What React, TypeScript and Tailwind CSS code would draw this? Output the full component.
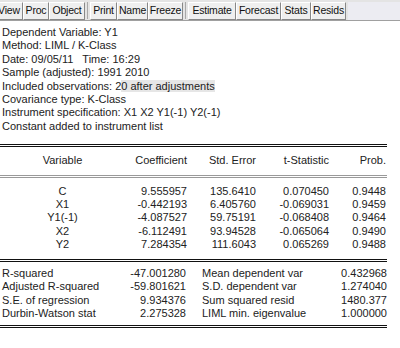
const font = { fontFamily: '"Liberation Sans", Arial, sans-serif' };

const buttons = [
  { label: "View", w: "w-[28px]", first: true },
  { label: "Proc", w: "w-[26px]" },
  { label: "Object", w: "w-[36px]" },
  { sep: true },
  { label: "Print", w: "w-[27px]" },
  { label: "Name", w: "w-[31px]" },
  { label: "Freeze", w: "w-[35px]" },
  { sep: true },
  { label: "Estimate", w: "w-[48px]" },
  { label: "Forecast", w: "w-[45px]" },
  { label: "Stats", w: "w-[30px]" },
  { label: "Resids", w: "w-[35px]" },
];

const header = [
  "Dependent Variable: Y1",
  "Method: LIML / K-Class",
  "Date: 09/05/11   Time: 16:29",
  "Sample (adjusted): 1991 2010",
  null,
  "Covariance type: K-Class",
  "Instrument specification: X1 X2 Y1(-1) Y2(-1)",
  "Constant added to instrument list",
];

const rows = [
  ["C", "9.555957", "135.6410", "0.070450", "0.9448"],
  ["X1", "-0.442193", "6.405760", "-0.069031", "0.9459"],
  ["Y1(-1)", "-4.087527", "59.75191", "-0.068408", "0.9464"],
  ["X2", "-6.112491", "93.94528", "-0.065064", "0.9490"],
  ["Y2", "7.284354", "111.6043", "0.065269", "0.9488"],
];

const stats = [
  ["R-squared", "-47.001280", "Mean dependent var", "0.432968"],
  ["Adjusted R-squared", "-59.801621", "S.D. dependent var", "1.274040"],
  ["S.E. of regression", "9.934376", "Sum squared resid", "1480.377"],
  ["Durbin-Watson stat", "2.275328", "LIML min. eigenvalue", "1.000000"],
];

const cols = "grid grid-cols-[125px_62px_69px_73px_57px]";

function Toolbar() {
  return (
    <div className="flex h-[21px] items-center overflow-hidden border-b border-[#a0a0a0] bg-[#e4e4e4] pt-[1px]">
      {buttons.map((b, i) =>
        b.sep ? (
          <div key={i} className="mx-[2px] h-[17px] w-[1px] border-l border-[#a8a8a8] bg-white" />
        ) : (
          <div
            key={i}
            className={`${b.w} ${b.first ? "-ml-[5px]" : ""} flex h-[18px] shrink-0 items-center justify-center border border-t-white border-l-white border-r-[#888] border-b-[#888] bg-[#efefef] text-[10.5px] tracking-[-0.2px] text-[#111]`}
          >
            {b.label}
          </div>
        )
      )}
      <div className="ml-[2px] h-[18px] flex-1 bg-[#ececf2]" />
    </div>
  );
}

export default function App() {
  return (
    <div className="h-[348px] w-[400px] overflow-hidden bg-white text-[11px] leading-[13.4px] text-[#222]" style={font}>
      <Toolbar />
      <div className="px-[2px] pt-[5px]">
        {header.map((h, i) =>
          h ? (
            <div key={i} className="whitespace-pre">{h}</div>
          ) : (
            <div key={i} className="whitespace-pre">
              Included observations: 2<span className="bg-[#e6e6e6]">0 after adjustments</span>
            </div>
          )
        )}
      </div>
      <div className="mt-[11px] w-[387px]">
        <div className="h-[3px] border-y border-[#111]" />
        <div className={`${cols} py-[7px]`}>
          <div className="text-center">Variable</div>
          <div className="text-right">Coefficient</div>
          <div className="text-right">Std. Error</div>
          <div className="text-right">t-Statistic</div>
          <div className="text-right">Prob.</div>
        </div>
        <div className="h-[3px] border-y border-[#999]" />
        <div className="py-[7px]">
          {rows.map((r) => (
            <div key={r[0]} className={cols}>
              <div className="text-center">{r[0]}</div>
              <div className="text-right">{r[1]}</div>
              <div className="text-right">{r[2]}</div>
              <div className="text-right">{r[3]}</div>
              <div className="text-right">{r[4]}</div>
            </div>
          ))}
        </div>
        <div className="h-[3px] border-y border-[#111]" />
        <div className="pt-[5px] pb-[5px]">
          {stats.map((s) => (
            <div key={s[0]} className="grid grid-cols-[186px_201px]">
              <div className="flex justify-between pl-[2px]">
                <span>{s[0]}</span>
                <span>{s[1]}</span>
              </div>
              <div className="flex justify-between pl-[16px]">
                <span>{s[2]}</span>
                <span>{s[3]}</span>
              </div>
            </div>
          ))}
        </div>
        <div className="h-[3px] border-y border-[#111]" />
      </div>
    </div>
  );
}
